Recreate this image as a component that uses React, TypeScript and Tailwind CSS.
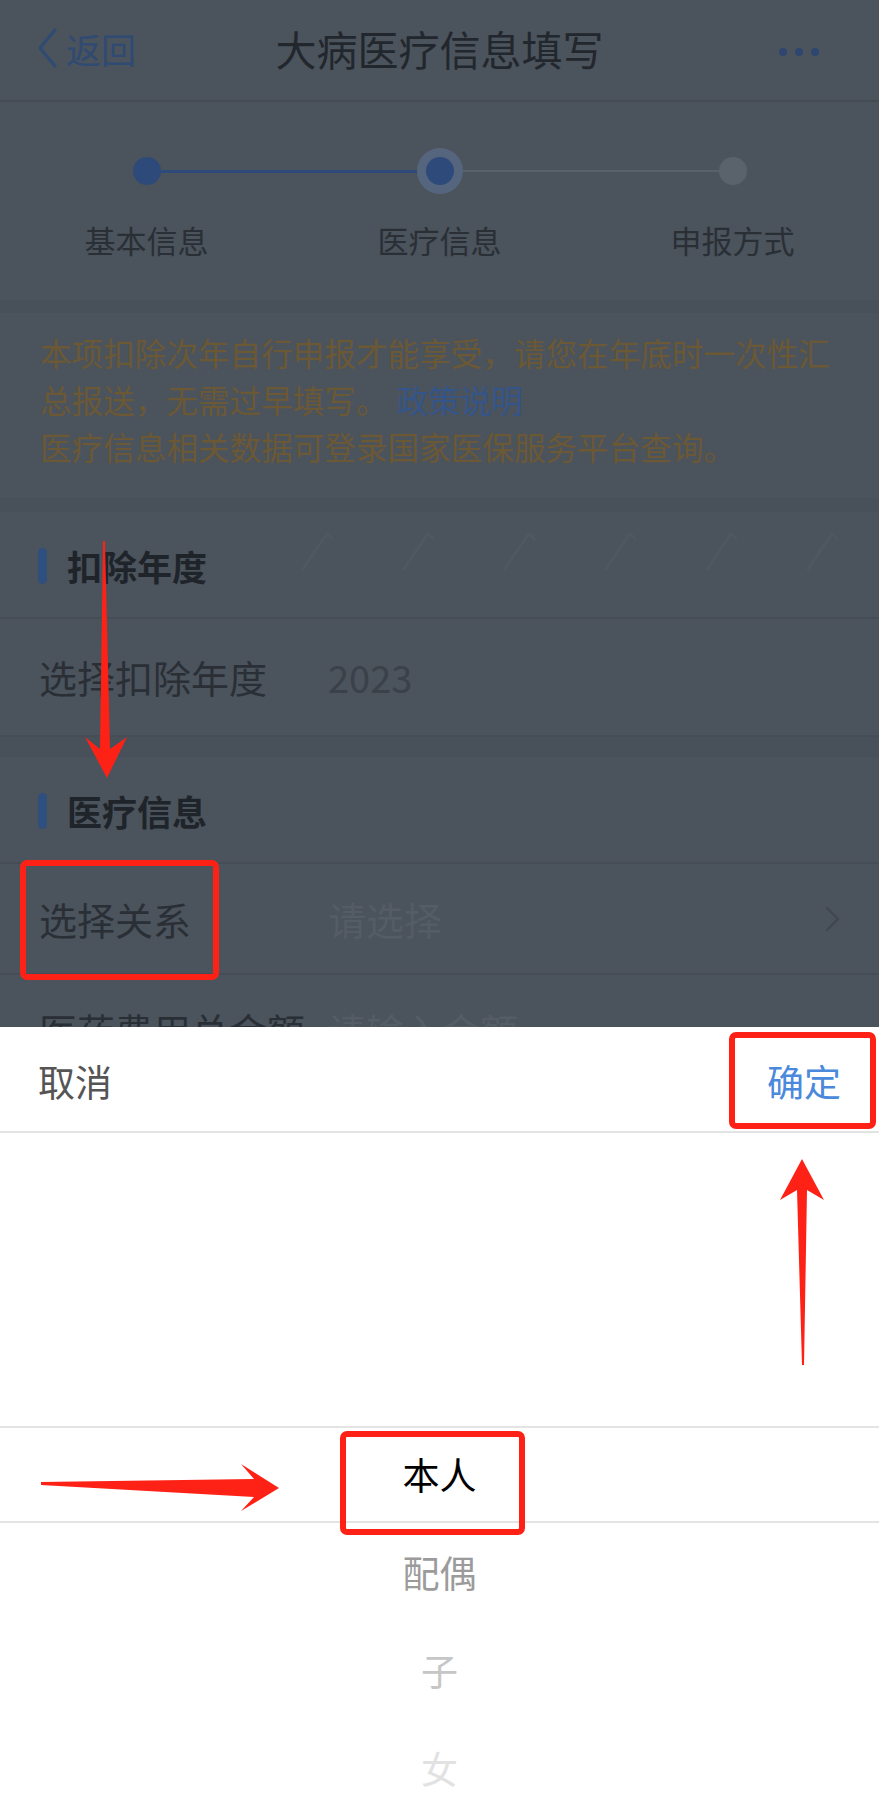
import { Fragment } from 'react';

const steps = [
  { label: '基本信息', state: 'done' },
  { label: '医疗信息', state: 'active' },
  { label: '申报方式', state: 'todo' },
];

const pickerItems = [
  { label: '配偶', color: 'text-[#9b9b9b]' },
  { label: '子', color: 'text-[#c6c6c6]' },
  { label: '女', color: 'text-[#e2e2e2]' },
];

const slashX = [303, 404, 505, 606, 707, 808];

function StepDot({ state }: { state: string }) {
  if (state === 'active') {
    return (
      <div className="flex h-[46px] w-[46px] items-center justify-center rounded-full bg-[#56657e]">
        <div className="h-[28px] w-[28px] rounded-full bg-[#2e4a7a]" />
      </div>
    );
  }
  return (
    <div
      className={`h-[28px] w-[28px] rounded-full ${state === 'done' ? 'bg-[#2e4a7a]' : 'bg-[#5a626b]'}`}
    />
  );
}

function Chevron() {
  return (
    <svg width="18" height="30" viewBox="0 0 18 30" className="text-[#40474f]">
      <path d="M4 4 L15 15 L4 26" fill="none" stroke="currentColor" strokeWidth="2.2" strokeLinecap="round" strokeLinejoin="round" />
    </svg>
  );
}

function SectionTitle({ title, pattern }: { title: string; pattern?: boolean }) {
  return (
    <div className="relative flex h-[107px] items-center border-b-2 border-[#464d56] pt-[2px]">
      {pattern && (
        <svg className="absolute left-0 top-0 h-full w-full" viewBox="0 0 879 107" preserveAspectRatio="none">
          {slashX.map((x) => (
            <path
              key={x}
              d={`M${x} 58 L${x + 24} 22 L${x + 29} 27`}
              fill="none"
              stroke="#4f5761"
              strokeWidth="3"
              strokeLinecap="round"
            />
          ))}
        </svg>
      )}
      <div className="relative ml-[38px] h-[36px] w-[9px] rounded-full bg-[#2f4f7f]" />
      <h2 className="relative ml-[20px] text-[35px] font-bold leading-none text-[#1f242a]">{title}</h2>
    </div>
  );
}

function FormRow({
  label,
  value,
  placeholder,
  arrow,
  height,
}: {
  label: string;
  value: string;
  placeholder?: boolean;
  arrow?: boolean;
  height: string;
}) {
  return (
    <div className={`flex ${height} items-center border-b-2 border-[#464d56] pl-[39px] pr-[38px]`}>
      <span className="w-[289px] shrink-0 text-[38px] leading-none text-[#2a2f36]">{label}</span>
      <span className={`text-[38px] leading-none ${placeholder ? 'text-[#545c65]' : 'text-[#3a4149]'}`}>
        {value}
      </span>
      {arrow && (
        <span className="ml-auto">
          <Chevron />
        </span>
      )}
    </div>
  );
}

export default function App() {
  return (
    <div className="relative h-[1819px] w-full overflow-hidden bg-[#4b535c] font-['Noto_Sans_CJK_SC','Noto_Sans',sans-serif]">
      {/* page under the mask */}
      <div className="flex flex-col">
        {/* Nav bar */}
        <header className="flex h-[102px] items-center justify-between border-b-2 border-[#444b53] pb-[4px]">
          <div className="flex w-[200px] items-center pl-[36px] text-[#2f4a73]">
            <svg width="22" height="40" viewBox="0 0 22 40">
              <path d="M19 2 L4 20 L19 38" fill="none" stroke="currentColor" strokeWidth="3" strokeLinecap="round" strokeLinejoin="round" />
            </svg>
            <span className="ml-[8px] text-[35px] leading-none">返回</span>
          </div>
          <h1 className="text-[41px] leading-none text-[#22272d]">大病医疗信息填写</h1>
          <div className="flex w-[200px] justify-end gap-[8px] pr-[60px] pt-[8px]">
            <span className="h-[8px] w-[8px] rounded-full bg-[#2e4670]" />
            <span className="h-[8px] w-[8px] rounded-full bg-[#2e4670]" />
            <span className="h-[8px] w-[8px] rounded-full bg-[#2e4670]" />
          </div>
        </header>

        {/* Steps */}
        <section className="grid h-[198px] grid-cols-3">
          {steps.map((s, i) => (
            <div key={s.label} className="flex flex-col items-center">
              <div className="mt-[46px] flex h-[46px] w-full items-center">
                <div
                  className={`flex-1 ${i === 0 ? 'h-[3px]' : i === 1 ? 'h-[3px] bg-[#2e4a7a]' : 'h-[2px] bg-[#59616a]'}`}
                />
                <StepDot state={s.state} />
                <div
                  className={`flex-1 ${i === 0 ? 'h-[3px] bg-[#2e4a7a]' : i === 1 ? 'h-[2px] bg-[#59616a]' : 'h-[3px]'}`}
                />
              </div>
              <span className="mt-[30px] text-[31px] leading-none text-[#2a2f36]">{s.label}</span>
            </div>
          ))}
        </section>

        <div className="h-[13px] bg-[#48505a]" />

        {/* Notice */}
        <div className="flex flex-col px-[40px] pb-[28px] pt-[16px] text-[31.6px] leading-[47px] text-[#6b5835]">
          <span className="whitespace-nowrap">本项扣除次年自行申报才能享受，请您在年底时一次性汇</span>
          <div className="flex gap-[9px] whitespace-nowrap">
            <span>总报送，无需过早填写。</span>
            <span className="text-[#34558a]">政策说明</span>
          </div>
          <span className="whitespace-nowrap">医疗信息相关数据可登录国家医保服务平台查询。</span>
        </div>

        <div className="h-[14px] bg-[#48505a]" />

        <SectionTitle title="扣除年度" pattern />
        <FormRow label="选择扣除年度" value="2023" height="h-[118px]" />

        <div className="h-[20px] bg-[#48505a]" />

        <SectionTitle title="医疗信息" />
        <FormRow label="选择关系" value="请选择" placeholder arrow height="h-[111px]" />
        <FormRow label="医药费用总金额" value="请输入金额" placeholder height="h-[112px]" />
      </div>

      {/* Bottom picker sheet */}
      <div className="absolute bottom-0 left-0 right-0 flex h-[792px] flex-col bg-white">
        <div className="flex h-[106px] shrink-0 items-center justify-between border-b-2 border-[#e3e3e3] px-[38px] pt-[5px]">
          <span className="text-[37px] leading-none text-[#555555]">取消</span>
          <span className="text-[37px] leading-none text-[#4a89dc]">确定</span>
        </div>
        <div className="flex flex-col">
          <div className="h-[293px]" />
          <div className="flex h-[97px] items-center justify-center border-y-2 border-[#e4e4e4]">
            <span className="text-[37px] leading-none text-black">本人</span>
          </div>
          {pickerItems.map((item) => (
            <Fragment key={item.label}>
              <div className="flex h-[98px] items-center justify-center">
                <span className={`text-[37px] leading-none ${item.color}`}>{item.label}</span>
              </div>
            </Fragment>
          ))}
        </div>
      </div>

      {/* Red annotations */}
      <svg className="pointer-events-none absolute inset-0 h-full w-full" viewBox="0 0 879 1819">
        <g fill="none" stroke="#fe2216" strokeWidth="6">
          <rect x="23" y="863" width="193" height="114" rx="4" />
          <rect x="732" y="1035" width="141" height="91" rx="4" />
          <rect x="343" y="1434" width="179" height="98" rx="4" />
        </g>
        <g fill="#fe2216">
          <polygon points="103,541 105,541 110,749 127,737 107,778 85,737 100,749" />
          <polygon points="802,1159 824,1200 807,1190 804,1365 802,1365 797,1190 780,1200" />
          <polygon points="41,1482 254,1479 241,1464 279,1488 241,1511 254,1497 41,1485" />
        </g>
      </svg>
    </div>
  );
}
